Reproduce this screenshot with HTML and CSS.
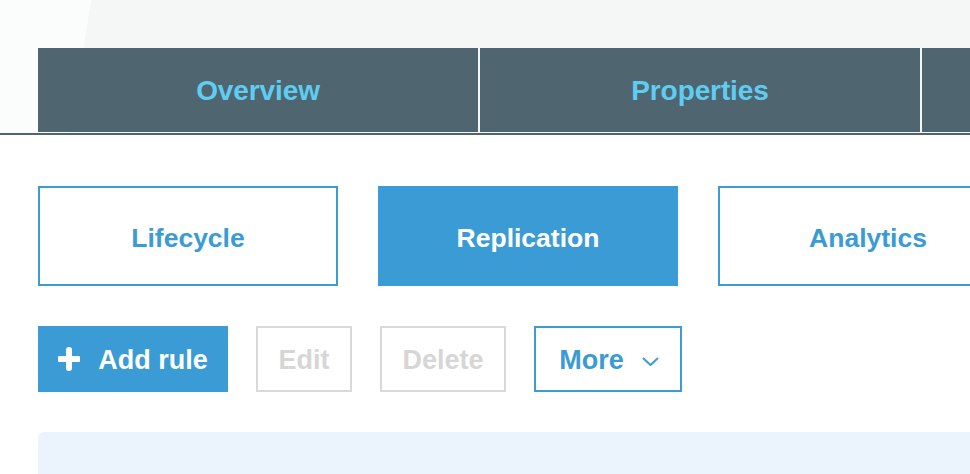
FILE: index.html
```html
<!DOCTYPE html>
<html lang="en">
<head>
<meta charset="utf-8">
<title>Bucket management</title>
<link rel="stylesheet" href="styles.css">
</head>
<body>
<div class="page">
  <header class="header">
    <nav class="tabs">
      <div class="tab">Overview</div>
      <div class="tab">Properties</div>
      <div class="tab tab-clipped"></div>
    </nav>
  </header>
  <main class="content">
    <div class="subtabs">
      <div class="subtab">Lifecycle</div>
      <div class="subtab active">Replication</div>
      <div class="subtab subtab-last">Analytics</div>
    </div>
    <div class="actions">
      <div class="btn btn-primary btn-add">
        <svg class="plus" width="22" height="24" viewBox="0 0 22 24" aria-hidden="true">
          <path d="M11 3 V21 M2 12 H20" stroke="#fff" stroke-width="6" stroke-linecap="round" fill="none"/>
        </svg>
        <span>Add rule</span>
      </div>
      <div class="btn btn-disabled btn-edit">Edit</div>
      <div class="btn btn-disabled btn-delete">Delete</div>
      <div class="btn btn-outline btn-more">
        <span>More</span>
        <svg class="chev" width="17" height="9" viewBox="0 0 17 9" aria-hidden="true">
          <path d="M1 1 L8.5 8 L16 1" stroke="#3a9bd5" stroke-width="2" fill="none"/>
        </svg>
      </div>
    </div>
    <div class="panel"></div>
  </main>
</div>
</body>
</html>
```
FILE: styles.css
```css
html, body {
  margin: 0;
  padding: 0;
  background: #ffffff;
}
body {
  width: 970px;
  height: 474px;
  overflow: hidden;
  font-family: "Liberation Sans", Arial, Helvetica, sans-serif;
  font-weight: bold;
}
.page {
  width: 970px;
  overflow: hidden;
}
.header {
  padding: 48px 0 1px 38px;
  background: linear-gradient(99deg, #fbfcfc 0 90px, #f5f6f6 90px);
  border-bottom: 2px solid #4f6570;
}
.tabs {
  display: flex;
  gap: 2px;
}
.tab {
  flex: 0 0 440px;
  height: 84px;
  background: #4f6570;
  color: #5fcdf1;
  font-size: 28px;
  display: flex;
  align-items: center;
  justify-content: center;
  letter-spacing: -0.1px;
  padding-top: 1px;
  box-sizing: border-box;
}
.tab-clipped {
  flex: 1 1 auto;
}
.content {
  padding: 51px 0 0 38px;
}
.subtabs {
  display: flex;
  gap: 40px;
}
.subtab {
  flex: 0 0 300px;
  height: 100px;
  box-sizing: border-box;
  border: 2px solid #3a9bd5;
  color: #3a9bd5;
  font-size: 26.5px;
  display: flex;
  align-items: center;
  justify-content: center;
  padding-top: 4px;
}
.subtab-last {
  flex: 0 0 300px;
  margin-right: -300px;
}
.subtab.active {
  background: #3a9bd5;
  color: #ffffff;
}
.actions {
  display: flex;
  gap: 28px;
  margin-top: 40px;
}
.btn {
  height: 66px;
  box-sizing: border-box;
  display: flex;
  align-items: center;
  justify-content: center;
  font-size: 27px;
  padding-top: 2px;
}
.btn-primary {
  background: #3a9bd5;
  color: #ffffff;
}
.btn-add {
  width: 190px;
  gap: 18px;
}
.plus {
  display: block;
  margin-top: -2px;
}
.btn-disabled {
  border: 2px solid #d9d9d9;
  color: #d6d6d6;
}
.btn-edit {
  width: 96px;
}
.btn-delete {
  width: 126px;
}
.btn-outline {
  border: 2px solid #3a9bd5;
  color: #3a9bd5;
}
.btn-more {
  width: 148px;
  gap: 18px;
  padding-left: 2px;
}
.chev {
  display: block;
  margin-top: 2px;
}
.panel {
  margin-top: 40px;
  height: 42px;
  background: #ebf4fc;
  border-top-left-radius: 6px;
}
```
